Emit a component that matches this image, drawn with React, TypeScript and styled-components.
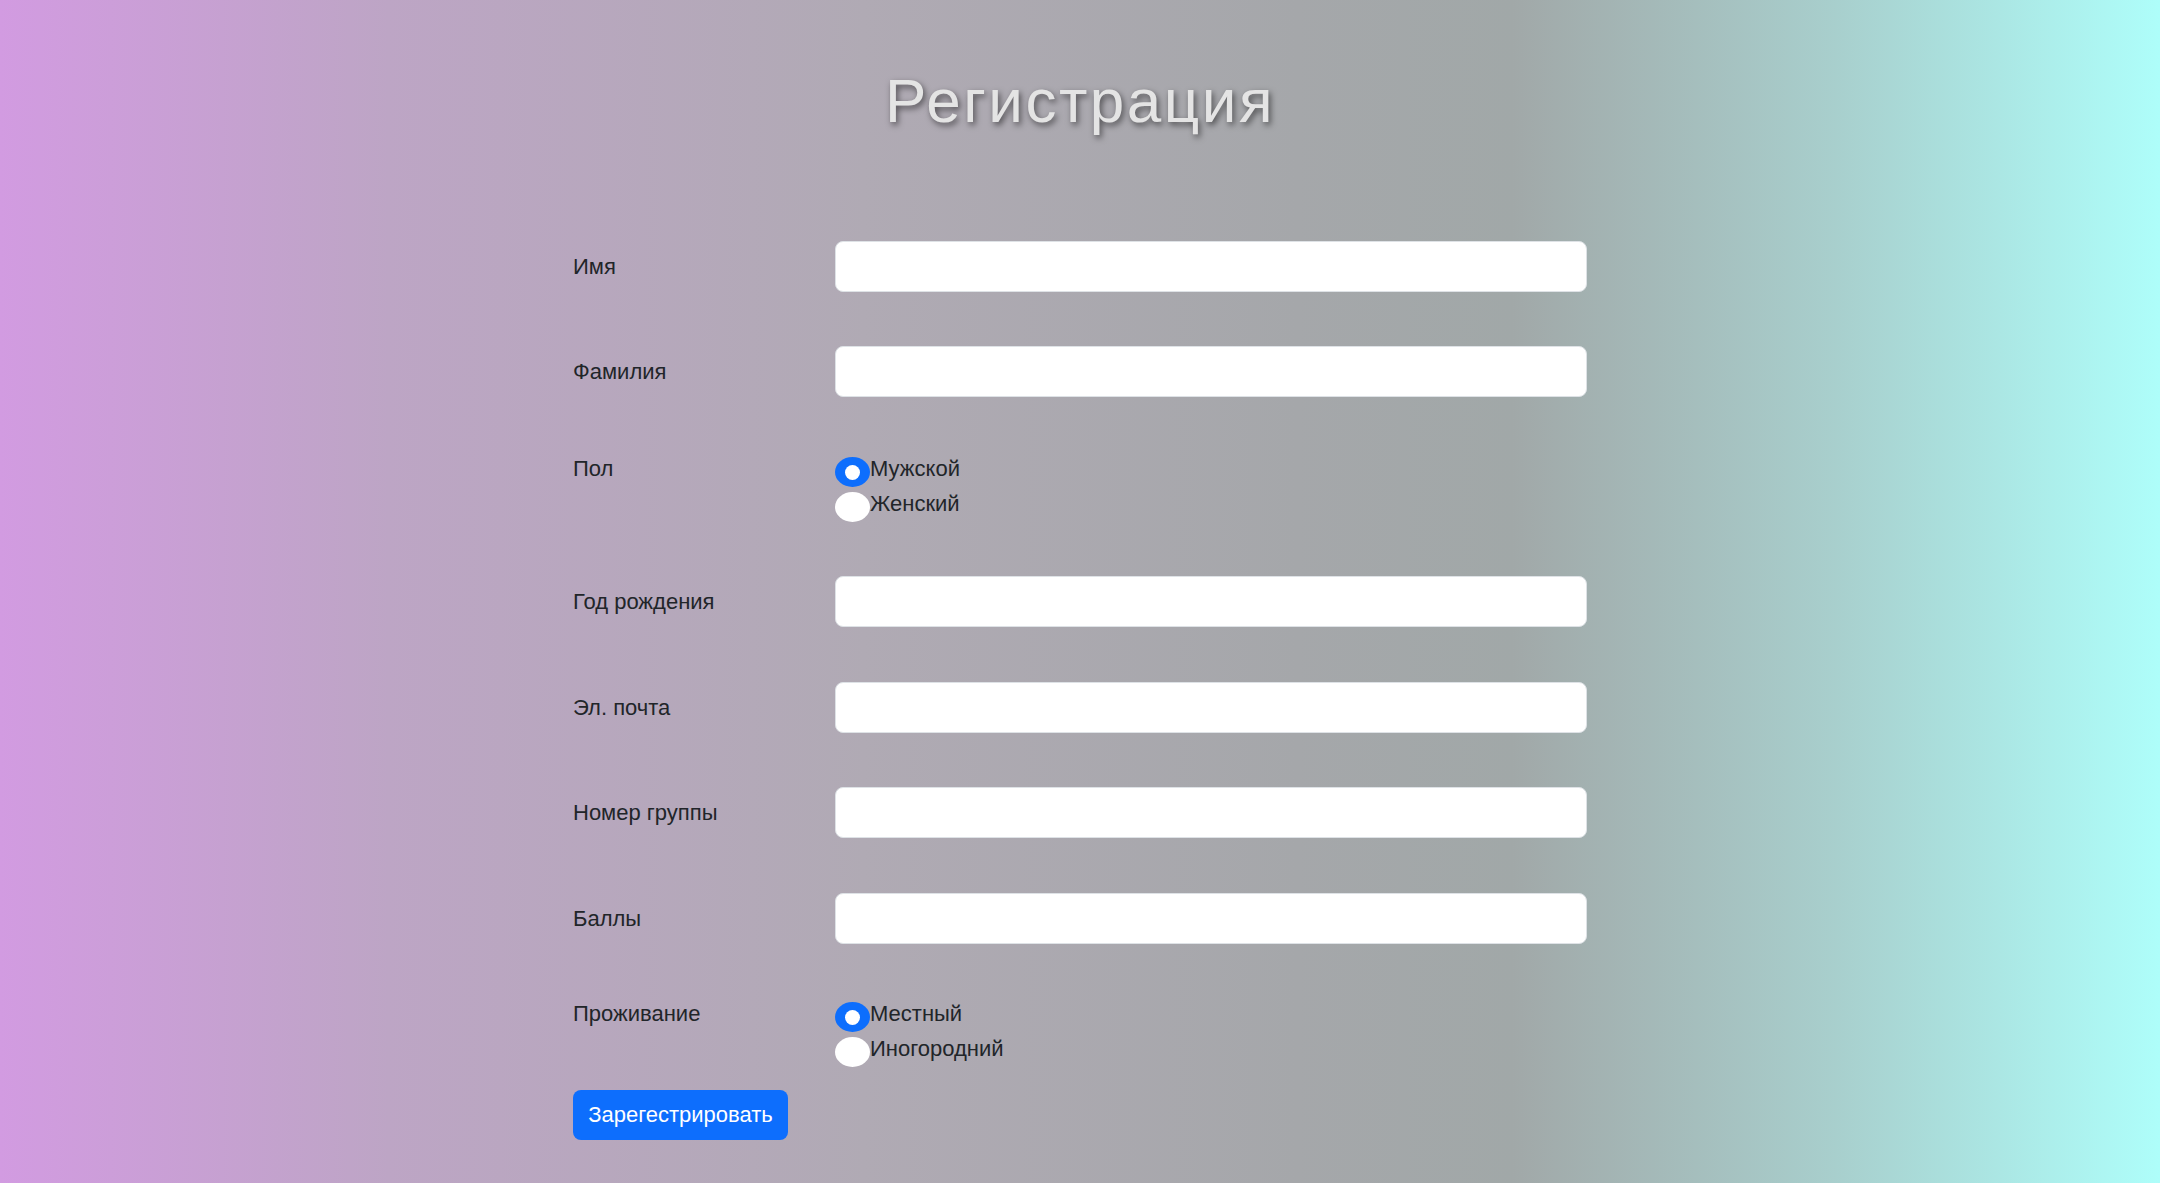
import React from "react";
import styled, { createGlobalStyle } from "styled-components";

const Global = createGlobalStyle`
  html, body { margin: 0; padding: 0; }
  body {
    min-height: 1183px;
    font-family: "Liberation Sans", Arial, sans-serif;
    color: #212529;
    background: linear-gradient(to right, #d29be1 0%, #bda5c5 18%, #b0aab4 40%, #a5a7aa 60%, #a1a8a8 70%, #a8cfcd 85%, #aefefa 100%);
    background-attachment: fixed;
  }
  * { box-sizing: border-box; }
`;

const Page = styled.div`
  min-height: 1183px;
  padding-top: 66px;
  display: flex;
  flex-direction: column;
  align-items: center;
`;

const Title = styled.h1`
  margin: 0 0 105px;
  font-size: 62px;
  line-height: 70px;
  font-weight: 400;
  letter-spacing: 2.5px;
  color: #e4e4e4;
  text-shadow: 2px 3px 6px rgba(0, 0, 0, 0.55);
`;

const Form = styled.form`
  width: 1014px;
  display: flex;
  flex-direction: column;
`;

const Row = styled.div<{ $gap: number; $top?: boolean }>`
  display: grid;
  grid-template-columns: 262px 752px;
  align-items: ${(p) => (p.$top ? "start" : "center")};
  margin-bottom: ${(p) => p.$gap}px;
`;

const Label = styled.label`
  font-size: 22px;
  line-height: 33px;
`;

const Input = styled.input`
  height: 51px;
  width: 100%;
  border: 1px solid #dee2e6;
  border-radius: 8px;
  background: #fff;
  font-size: 22px;
  padding: 8px 16px;
  outline: none;
`;

const RadioGroup = styled.div`
  display: flex;
  flex-direction: column;
`;

const RadioItem = styled.label`
  display: flex;
  align-items: flex-start;
  height: 35px;
  font-size: 22px;
  line-height: 33px;
`;

const RadioDot = styled.span<{ $checked?: boolean }>`
  width: 35px;
  height: 30px;
  margin-top: 5px;
  border-radius: 50%;
  flex: none;
  display: flex;
  align-items: center;
  justify-content: center;
  background: ${(p) => (p.$checked ? "#0d6efd" : "#fff")};
  &::after {
    content: "";
    width: 15px;
    height: 15px;
    border-radius: 50%;
    background: #fff;
    display: ${(p) => (p.$checked ? "block" : "none")};
  }
`;

const Button = styled.button`
  align-self: flex-start;
  width: 215px;
  height: 50px;
  background: #0d6efd;
  color: #fff;
  border: none;
  border-radius: 8px;
  font-family: "Liberation Sans", Arial, sans-serif;
  font-size: 22px;
  padding: 0;
`;

type Field = { label: string; gap: number };

const textFields1: Field[] = [
  { label: "Имя", gap: 54.4 },
  { label: "Фамилия", gap: 55 },
];
const textFields2: Field[] = [
  { label: "Год рождения", gap: 54.4 },
  { label: "Эл. почта", gap: 54.4 },
  { label: "Номер группы", gap: 54.4 },
  { label: "Баллы", gap: 53.5 },
];

const TextRow = ({ f }: { f: Field }) => (
  <Row $gap={f.gap}>
    <Label>{f.label}</Label>
    <Input type="text" />
  </Row>
);

const RadioRow = ({ label, options, gap }: { label: string; options: string[]; gap: number }) => (
  <Row $gap={gap} $top>
    <Label>{label}</Label>
    <RadioGroup>
      {options.map((o, i) => (
        <RadioItem key={o}>
          <RadioDot $checked={i === 0} />
          {o}
        </RadioItem>
      ))}
    </RadioGroup>
  </Row>
);

export default function App() {
  return (
    <>
      <Global />
      <Page>
        <Title>Регистрация</Title>
        <Form onSubmit={(e) => e.preventDefault()}>
          {textFields1.map((f) => (
            <TextRow key={f.label} f={f} />
          ))}
          <RadioRow label="Пол" options={["Мужской", "Женский"]} gap={54} />
          {textFields2.map((f) => (
            <TextRow key={f.label} f={f} />
          ))}
          <RadioRow label="Проживание" options={["Местный", "Иногородний"]} gap={22.5} />
          <Button type="submit">Зарегестрировать</Button>
        </Form>
      </Page>
    </>
  );
}
